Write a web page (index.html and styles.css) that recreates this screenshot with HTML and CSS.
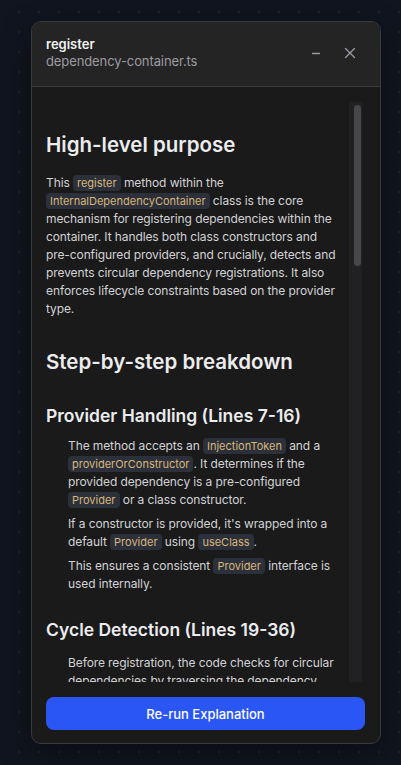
FILE: index.html
```html
<!DOCTYPE html>
<html lang="en">
<head>
  <meta charset="UTF-8">
  <meta name="viewport" content="width=device-width, initial-scale=1.0">
  <title>register – explanation</title>
  <link rel="stylesheet" href="styles.css">
</head>
<body>
  <div class="panel">
    <div class="panel-header">
      <div class="panel-title">
        <div class="symbol">register</div>
        <div class="file">dependency-container.ts</div>
      </div>
      <div class="panel-actions">
        <button class="icon-btn" title="Minimize">
          <svg width="10" height="10" viewBox="0 0 10 10"><path d="M1.5 5.5h7" stroke="currentColor" stroke-width="1.4" stroke-linecap="round"/></svg>
        </button>
        <button class="icon-btn" title="Close">
          <svg width="12" height="12" viewBox="0 0 12 12"><path d="M1.5 1.5l9 9M10.5 1.5l-9 9" stroke="currentColor" stroke-width="1.3" stroke-linecap="round"/></svg>
        </button>
      </div>
    </div>

    <div class="panel-body">
      <div class="explanation">
        <h2>High-level purpose</h2>
        <p>This <code>register</code> method within the <code>InternalDependencyContainer</code> class is the core mechanism for registering dependencies within the container. It handles both class constructors and <span class="nobreak">pre-configured</span> providers, and crucially, detects and prevents circular dependency registrations. It also enforces lifecycle constraints based on the provider type.</p>

        <h2 class="section">Step-by-step breakdown</h2>

        <h3>Provider Handling (Lines 7-16)</h3>
        <ul>
          <li>The method accepts an <code>InjectionToken</code> and a <code>providerOrConstructor</code>. It determines if the provided dependency is a <span class="nobreak">pre-configured</span> <code>Provider</code> or a class constructor.</li>
          <li>If a constructor is provided, it's wrapped into a default <code>Provider</code> using <code>useClass</code>.</li>
          <li>This ensures a consistent <code>Provider</code> interface is used internally.</li>
        </ul>

        <h3>Cycle Detection (Lines 19-36)</h3>
        <ul>
          <li>Before registration, the code checks for circular dependencies by traversing the dependency</li>
        </ul>
      </div>
      <!-- barre de défilement dessinée à la main -->
      <div class="scroll-track">
        <div class="scroll-thumb"></div>
      </div>
    </div>

    <div class="panel-footer">
      <button class="rerun-btn">Re-run Explanation</button>
    </div>
  </div>
</body>
</html>
```

FILE: styles.css
```css
* {
  box-sizing: border-box;
}

body {
  margin: 0;
  min-height: 765px;
  font-family: Inter, "Noto Sans", sans-serif;
  background-color: #11151f;
  background-image: radial-gradient(circle, rgba(255, 255, 255, 0.06) 1px, transparent 1.2px);
  background-size: 20px 20px;
  background-position: 9px 2px;
  padding: 21px 20px 0 31px;
}

.panel {
  width: 350px;
  height: 723px;
  background: #1a1a1b;
  border: 1px solid #3a3a3d;
  border-radius: 10px;
  box-shadow: 0 10px 30px rgba(0, 0, 0, 0.4);
  display: flex;
  flex-direction: column;
  overflow: hidden;
}

.panel-header {
  background: #242425;
  border-bottom: 1px solid #3a3a3b;
  padding: 14px 16px 16px 14px;
  display: flex;
  align-items: center;
  justify-content: space-between;
}

.symbol {
  color: #f2f2f2;
  font-size: 13px;
  font-weight: 600;
  line-height: 17px;
}

.file {
  color: #9b9ba0;
  font-size: 13px;
  line-height: 17px;
  letter-spacing: -0.1px;
}

.panel-actions {
  display: flex;
  gap: 6px;
}

.icon-btn {
  width: 28px;
  height: 24px;
  border: none;
  background: none;
  color: #9d9da3;
  padding: 0;
  display: flex;
  align-items: center;
  justify-content: center;
  cursor: pointer;
}

.panel-body {
  flex: 1;
  min-height: 0;
  padding: 15px 18px 0 14px;
  display: flex;
}

.explanation {
  flex: 1;
  overflow: hidden;
  padding-right: 5px;
  color: #d2d2d4;
  font-size: 12px;
  line-height: 18px;
  letter-spacing: -0.1px;
}

.nobreak {
  white-space: nowrap;
}

.scroll-track {
  width: 13px;
  background: #212123;
  padding: 3px 1px 0 5px;
}

.scroll-thumb {
  height: 161px;
  background: #47474a;
  border-radius: 4px;
}

.explanation h2 {
  color: #ececee;
  font-size: 20.5px;
  line-height: 28px;
  font-weight: 600;
  letter-spacing: 0;
  margin: 29px 0 0;
}

.explanation h2.section {
  margin-top: 30px;
}

.explanation h3 {
  color: #ececee;
  font-size: 17.5px;
  line-height: 24px;
  font-weight: 600;
  letter-spacing: 0;
  margin: 28px 0 0;
}

.explanation p {
  margin: 15px 0 0;
}

.explanation ul {
  list-style: none;
  margin: 9px 0 0;
  padding-left: 22px;
}

.explanation li + li {
  margin-top: 6px;
}

.explanation ul + h3 {
  margin-top: 25px;
}

.explanation h3 + ul:last-child {
  margin-top: 12px;
}

code {
  font-family: Inter, "Noto Sans", sans-serif;
  font-size: 11px;
  letter-spacing: 0;
  color: #d8b679;
  background: #2b303a;
  padding: 1px 4px;
  border-radius: 4px;
}

.panel-footer {
  padding: 15px 15px 13px 14px;
}

.rerun-btn {
  width: 100%;
  height: 33px;
  border: none;
  border-radius: 8px;
  background: #2a56f6;
  color: #ffffff;
  font-family: Inter, "Noto Sans", sans-serif;
  font-size: 13px;
  font-weight: 500;
  cursor: pointer;
}

.rerun-btn:hover {
  background: #2148db;
}
```
